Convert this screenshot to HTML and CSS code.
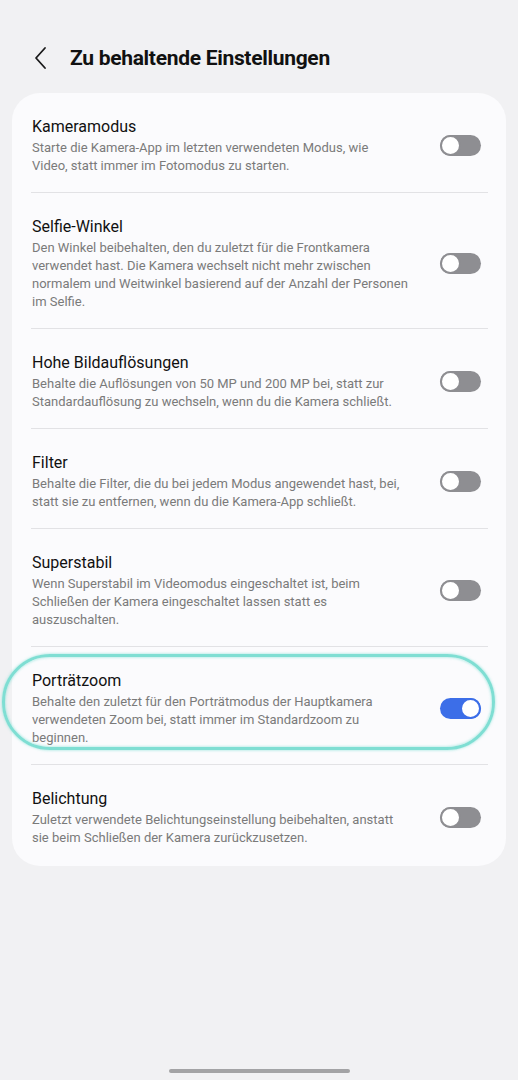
FILE: index.html
```
<!DOCTYPE html>
<html lang="de">
<head>
    <meta charset="UTF-8">
    <meta name="viewport" content="width=device-width, initial-scale=1.0">
    <title>Zu behaltende Einstellungen</title>
    <link rel="stylesheet" href="styles.css">
</head>
<body>
    <div class="screen">
        <header class="top-bar">
            <button class="back" type="button" aria-label="Zurück">
                <svg width="14" height="24" viewBox="0 0 14 24">
                    <path d="M11 2 L2 12 L11 22" fill="none" stroke="#1a1a1a" stroke-width="1.8" stroke-linecap="round" stroke-linejoin="round"/>
                </svg>
            </button>
            <h1>Zu behaltende Einstellungen</h1>
        </header>

        <div class="card">
            <div class="row">
                <div class="text">
                    <div class="title">Kameramodus</div>
                    <div class="desc">Starte die Kamera-App im letzten verwendeten Modus, wie<br>Video, statt immer im Fotomodus zu starten.</div>
                </div>
                <span class="switch"></span>
            </div>

            <div class="row">
                <div class="text">
                    <div class="title">Selfie-Winkel</div>
                    <div class="desc">Den Winkel beibehalten, den du zuletzt für die Frontkamera<br>verwendet hast. Die Kamera wechselt nicht mehr zwischen<br>normalem und Weitwinkel basierend auf der Anzahl der Personen<br>im Selfie.</div>
                </div>
                <span class="switch"></span>
            </div>

            <div class="row">
                <div class="text">
                    <div class="title">Hohe Bildauflösungen</div>
                    <div class="desc">Behalte die Auflösungen von 50 MP und 200 MP bei, statt zur<br>Standardauflösung zu wechseln, wenn du die Kamera schließt.</div>
                </div>
                <span class="switch"></span>
            </div>

            <div class="row">
                <div class="text">
                    <div class="title">Filter</div>
                    <div class="desc">Behalte die Filter, die du bei jedem Modus angewendet hast, bei,<br>statt sie zu entfernen, wenn du die Kamera-App schließt.</div>
                </div>
                <span class="switch"></span>
            </div>

            <div class="row">
                <div class="text">
                    <div class="title">Superstabil</div>
                    <div class="desc">Wenn Superstabil im Videomodus eingeschaltet ist, beim<br>Schließen der Kamera eingeschaltet lassen statt es<br>auszuschalten.</div>
                </div>
                <span class="switch"></span>
            </div>

            <div class="row">
                <div class="text">
                    <div class="title">Porträtzoom</div>
                    <div class="desc">Behalte den zuletzt für den Porträtmodus der Hauptkamera<br>verwendeten Zoom bei, statt immer im Standardzoom zu<br>beginnen.</div>
                </div>
                <span class="switch on"></span>
                <span class="marker"></span>
            </div>

            <div class="row">
                <div class="text">
                    <div class="title">Belichtung</div>
                    <div class="desc">Zuletzt verwendete Belichtungseinstellung beibehalten, anstatt<br>sie beim Schließen der Kamera zurückzusetzen.</div>
                </div>
                <span class="switch"></span>
            </div>
        </div>

        <div class="home-bar"></div>
    </div>
</body>
</html>
```

FILE: styles.css
```
body {
    margin: 0;
    background-color: #f1f1f3;
    font-family: Roboto, "Noto Sans", sans-serif;
    color: #111;
}

.screen {
    height: 1080px;
    display: flex;
    flex-direction: column;
    padding: 0 12px;
    box-sizing: border-box;
}

.top-bar {
    display: flex;
    align-items: center;
    height: 56px;
    margin-top: 30px;
    margin-bottom: 7px;
}

.back {
    background: none;
    border: none;
    padding: 0;
    margin-left: 22px;
    width: 14px;
    height: 24px;
    display: flex;
}

.top-bar h1 {
    margin: 0 0 0 22px;
    font-size: 21px;
    font-weight: 700;
    letter-spacing: -0.3px;
    color: #111;
}

.card {
    background-color: #fbfbfd;
    border-radius: 28px;
    padding: 0 18px 0 19px;
}

.row {
    position: relative;
    display: flex;
    align-items: center;
    padding: 23px 7px 17px 1px;
    border-bottom: 1px solid #e2e2e5;
}

.row:last-child {
    border-bottom: none;
    padding-bottom: 19px;
}

.text {
    flex: 1;
}

.title {
    font-size: 16px;
    line-height: 22px;
    margin-bottom: 1px;
    color: #111;
}

.desc {
    font-size: 13px;
    line-height: 18px;
    color: #7a7a7a;
    white-space: nowrap;
}

.switch {
    position: relative;
    width: 41px;
    height: 21px;
    border-radius: 11px;
    background-color: #8e8e92;
    flex-shrink: 0;
}

.switch::after {
    content: "";
    position: absolute;
    left: 0;
    top: 0;
    width: 17px;
    height: 17px;
    border-radius: 50%;
    background-color: #fff;
    border: 2px solid #8e8e92;
}

.switch.on {
    background-color: #3c6ee8;
}

.switch.on::after {
    left: auto;
    right: 0;
    border-color: #3c6ee8;
}

.marker {
    position: absolute;
    left: -29px;
    right: -7px;
    top: 7px;
    bottom: 14px;
    border: 3px solid #7fded3;
    border-radius: 48px;
    box-shadow: 0 0 3px rgba(100, 220, 205, 0.7), inset 0 0 3px rgba(100, 220, 205, 0.7);
    pointer-events: none;
}

.home-bar {
    margin: auto auto 7px;
    width: 181px;
    height: 4px;
    border-radius: 2px;
    background-color: #a3a3a5;
}
```
